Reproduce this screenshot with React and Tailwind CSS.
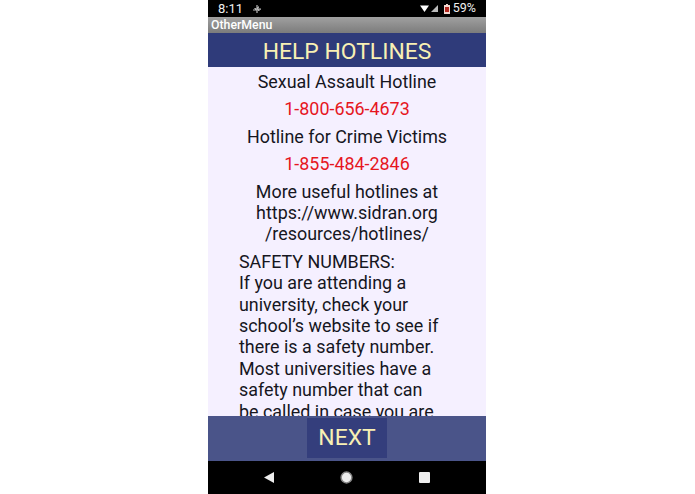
const F = { fontFamily: "Roboto, sans-serif" };

function Line({ children, className = "" }) {
  return <div className={`text-center ${className}`}>{children}</div>;
}

export default function App() {
  return (
    <div className="w-[695px] h-[494px] bg-white flex" style={F}>
      <div className="ml-[208px] w-[278px] h-[494px] flex flex-col overflow-hidden">
        <div className="h-[17px] bg-black flex items-center justify-between text-[#eeeeee] text-[12.5px] pl-[10px] pr-[10px] shrink-0">
          <div className="flex items-center gap-[10px]">
            <span className="text-[13px]">8:11</span>
            <svg width="8" height="8" viewBox="0 0 8 8" fill="#bbb">
              <path d="M3.4 0h1.2v2.2L6 1v1.6L4.6 4H3.4zM0 4.4h2.2L1 3h1.6L4 4.4v1.2H0zM8 3.6v1.2H5.8L7 6H5.4L4 4.6V3.4h4z" />
              <path d="M3.4 4.5h1.2V8H3.4z" />
            </svg>
          </div>
          <div className="flex items-center gap-[2px]">
            <svg width="9" height="7" viewBox="0 0 9 7" fill="#fff"><path d="M0 0.5h9L4.5 7z" /></svg>
            <svg width="7" height="7" viewBox="0 0 7 7" fill="#bbb"><path d="M7 0v7H0z" /></svg>
            <svg width="6" height="10" viewBox="0 0 6 10" className="ml-[4px]">
              <path d="M2 0h2v1h2v9H0V1h2z" fill="#f3d6cf" />
              <path d="M1 3h4v5H1z" fill="#b3261e" />
            </svg>
            <span className="ml-[1px]">59%</span>
          </div>
        </div>
        <div className="h-[16px] shrink-0 bg-gradient-to-b from-[#a0a0a0] to-[#7c7c7c] text-white text-[12.3px] font-medium leading-[17px] pl-[3px]">OtherMenu</div>
        <div className="h-[34px] shrink-0 bg-[#2f3b7a] text-[#f8f0b4] text-[22.9px] leading-[37px] text-center">HELP HOTLINES</div>
        <div className="flex-1 min-h-0 overflow-hidden bg-[#f5f0ff] text-[#16161e] text-[17.9px] leading-[21.4px]">
          <Line className="pt-1">Sexual Assault Hotline</Line>
          <Line className="text-[#e6161e] mt-[6px]">1-800-656-4673</Line>
          <Line className="mt-[6px]">Hotline for Crime Victims</Line>
          <Line className="text-[#e6161e] mt-[6px]">1-855-484-2846</Line>
          <Line className="mt-[6px]">More useful hotlines at<br />https://www.sidran.org<br />/resources/hotlines/</Line>
          <div className="mt-[6px] ml-[31px] w-[215px]">
            SAFETY NUMBERS:<br />If you are attending a<br />university, check your<br />school’s website to see if<br />there is a safety number.<br />Most universities have a<br />safety number that can<br />be called in case you are
          </div>
        </div>
        <div className="h-[45px] shrink-0 bg-[#4a5489] flex justify-center pt-[2px]">
          <div className="w-[80px] h-[40px] bg-[#343e7c] text-[#f8f0b4] text-[22.9px] leading-[40px] text-center">NEXT</div>
        </div>
        <div className="h-[33px] shrink-0 bg-black flex items-center justify-center gap-[66px]">
          <svg width="10" height="11" viewBox="0 0 10 11" fill="#eee"><path d="M10 0v11L0 5.5z" /></svg>
          <svg width="13" height="13" viewBox="0 0 14 14"><circle cx="7" cy="7" r="5.8" fill="#eee" stroke="#888" strokeWidth="1.6" /></svg>
          <svg width="11" height="11" viewBox="0 0 11 11" fill="#eee"><rect width="11" height="11" rx="1" /></svg>
        </div>
      </div>
    </div>
  );
}
